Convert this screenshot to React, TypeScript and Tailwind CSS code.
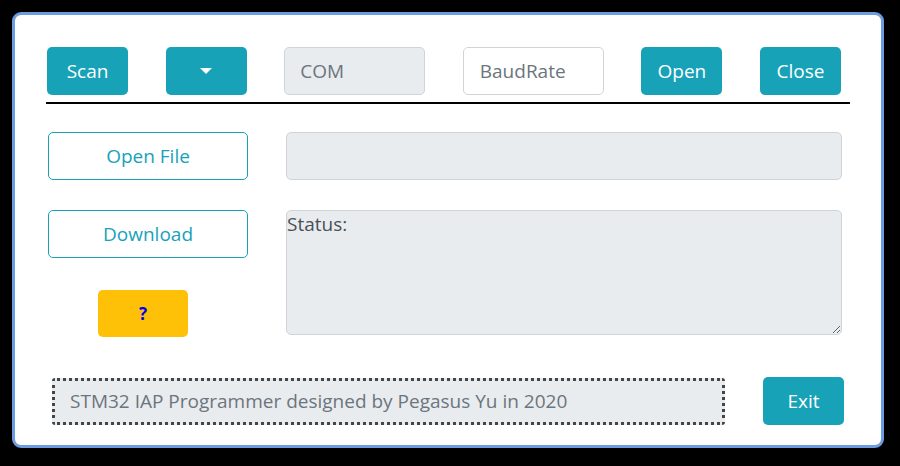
import React from 'react';

const font = { fontFamily: '"Open Sans", "Noto Sans", sans-serif' };

function TealButton({ label, children }: { label?: string; children?: React.ReactNode }) {
  return (
    <button className="flex h-[48px] w-[81px] items-center justify-center rounded-[5px] bg-[#17a2b8] text-[19px] text-white">
      {label}
      {children}
    </button>
  );
}

export default function App() {
  return (
    <div className="min-h-[466px] w-full bg-black pl-[12px] pt-[12px]" style={font}>
      <div className="h-[436px] w-[872px] rounded-[9px] border-[3px] border-[#6e9ce0] bg-white">
        {/* top bar */}
        <div className="ml-[32px] mt-[32px] flex w-[794px] items-center justify-between">
          <TealButton label="Scan" />
          <TealButton>
            <span className="h-0 w-0 border-x-[6px] border-t-[6px] border-x-transparent border-t-white" />
          </TealButton>
          <input
            readOnly
            placeholder="COM"
            className="h-[48px] w-[141px] rounded-[5px] border border-[#ced4da] bg-[#e9ecef] px-[15px] text-[19px] text-[#495057] placeholder:text-[#6c757d] outline-none"
          />
          <input
            readOnly
            placeholder="BaudRate"
            className="h-[48px] w-[141px] rounded-[5px] border border-[#ced4da] bg-white px-[16px] text-[19px] text-[#495057] placeholder:text-[#6c757d] outline-none"
          />
          <TealButton label="Open" />
          <TealButton label="Close" />
        </div>
        <div className="ml-[31px] mt-[7px] h-[2px] w-[804px] bg-black" />

        {/* file + status */}
        <div className="ml-[33px] mt-[28px] flex gap-[38px]">
          <div className="flex w-[200px] flex-col">
            <button className="h-[48px] w-[200px] rounded-[5px] border border-[#17a2b8] bg-white text-[19px] text-[#17a2b8]">
              Open File
            </button>
            <button className="mt-[30px] h-[48px] w-[200px] rounded-[5px] border border-[#17a2b8] bg-white text-[19px] text-[#17a2b8]">
              Download
            </button>
            <button className="ml-[50px] mt-[32px] h-[47px] w-[90px] rounded-[5px] bg-[#ffc107] text-[17px] font-bold text-[#0000ee]">
              ?
            </button>
          </div>
          <div className="flex w-[556px] flex-col">
            <input
              readOnly
              className="h-[48px] w-full rounded-[5px] border border-[#ced4da] bg-[#e9ecef] outline-none"
            />
            <textarea
              readOnly
              defaultValue="Status:"
              className="mt-[30px] h-[125px] w-full rounded-[5px] border border-[#ced4da] bg-[#e9ecef] p-0 text-[19px] leading-[26px] text-[#495057] outline-none"
            />
          </div>
        </div>

        {/* footer */}
        <div className="ml-[37px] mt-[40px] flex items-center">
          <div className="flex h-[47px] w-[673px] items-center rounded-[3px] border-[3px] border-dotted border-[#454545] bg-[#e9ecef] pl-[15px] text-[19px] text-[#6c757d]">
            STM32 IAP Programmer designed by Pegasus Yu in 2020
          </div>
          <div className="ml-[38px]">
            <TealButton label="Exit" />
          </div>
        </div>
      </div>
    </div>
  );
}
